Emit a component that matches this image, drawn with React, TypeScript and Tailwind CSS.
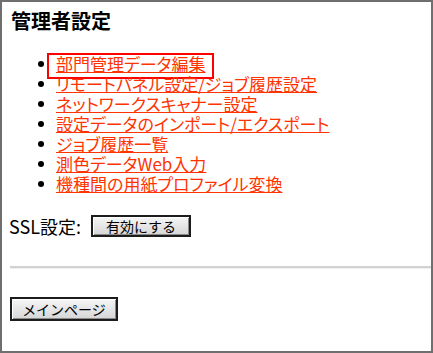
import React from 'react';

const menuItems = [
  '部門管理データ編集',
  'リモートパネル設定/ジョブ履歴設定',
  'ネットワークスキャナー設定',
  '設定データのインポート/エクスポート',
  'ジョブ履歴一覧',
  '測色データWeb入力',
  '機種間の用紙プロファイル変換',
];

const jpFont = "font-['Noto_Sans_CJK_JP','Liberation_Sans',sans-serif]";

const GrayButton: React.FC<{ label: string; className?: string }> = ({ label, className = '' }) => (
  <button
    className={`flex items-center justify-center border-2 border-[#1c1c1c] bg-gradient-to-b from-[#f6f6f6] to-[#d6d6d6] shadow-[inset_1px_1px_0_#ffffff,inset_-1px_-1px_0_#8a8a8a] text-[14px] leading-none text-black ${className}`}
  >
    {label}
  </button>
);

export default function App() {
  return (
    <div className={`w-[433px] h-[353px] border-2 border-[#6f6f6f] bg-white text-black ${jpFont}`}>
      {/* Title */}
      <h3 className="pl-[9px] pt-[7px] text-[20px] leading-[24px] font-bold">管理者設定</h3>

      {/* Menu */}
      <ul className="mt-[21px] flex flex-col">
        {menuItems.map((item, i) => (
          <li key={item} className="flex items-center h-[20px]">
            <span className="ml-[36px] w-[6px] h-[6px] rounded-full bg-black" />
            <a
              href="#"
              className="relative ml-[12px] text-[17px] leading-[20px] text-[#ff3300] underline underline-offset-[1px] [font-feature-settings:'palt']"
            >
              {item}
              {i === 0 && (
                <span className="absolute -left-[9px] -right-[8px] -top-[1px] -bottom-[5px] border-2 border-[#ff0000]" />
              )}
            </a>
          </li>
        ))}
      </ul>

      {/* SSL */}
      <div className="mt-[21px] flex items-center pl-[7px] h-[22px]">
        <span className="text-[18px] leading-none">SSL設定:</span>
        <GrayButton label="有効にする" className="ml-[10px] w-[100px] h-[22px]" />
      </div>

      <div className="mt-[29px] ml-[8px] h-[3px] border-t-2 border-[#d2d2d2] border-b border-b-[#efefef]" />

      <GrayButton label="メインページ" className="mt-[28px] ml-[8px] w-[108px] h-[24px]" />
    </div>
  );
}
